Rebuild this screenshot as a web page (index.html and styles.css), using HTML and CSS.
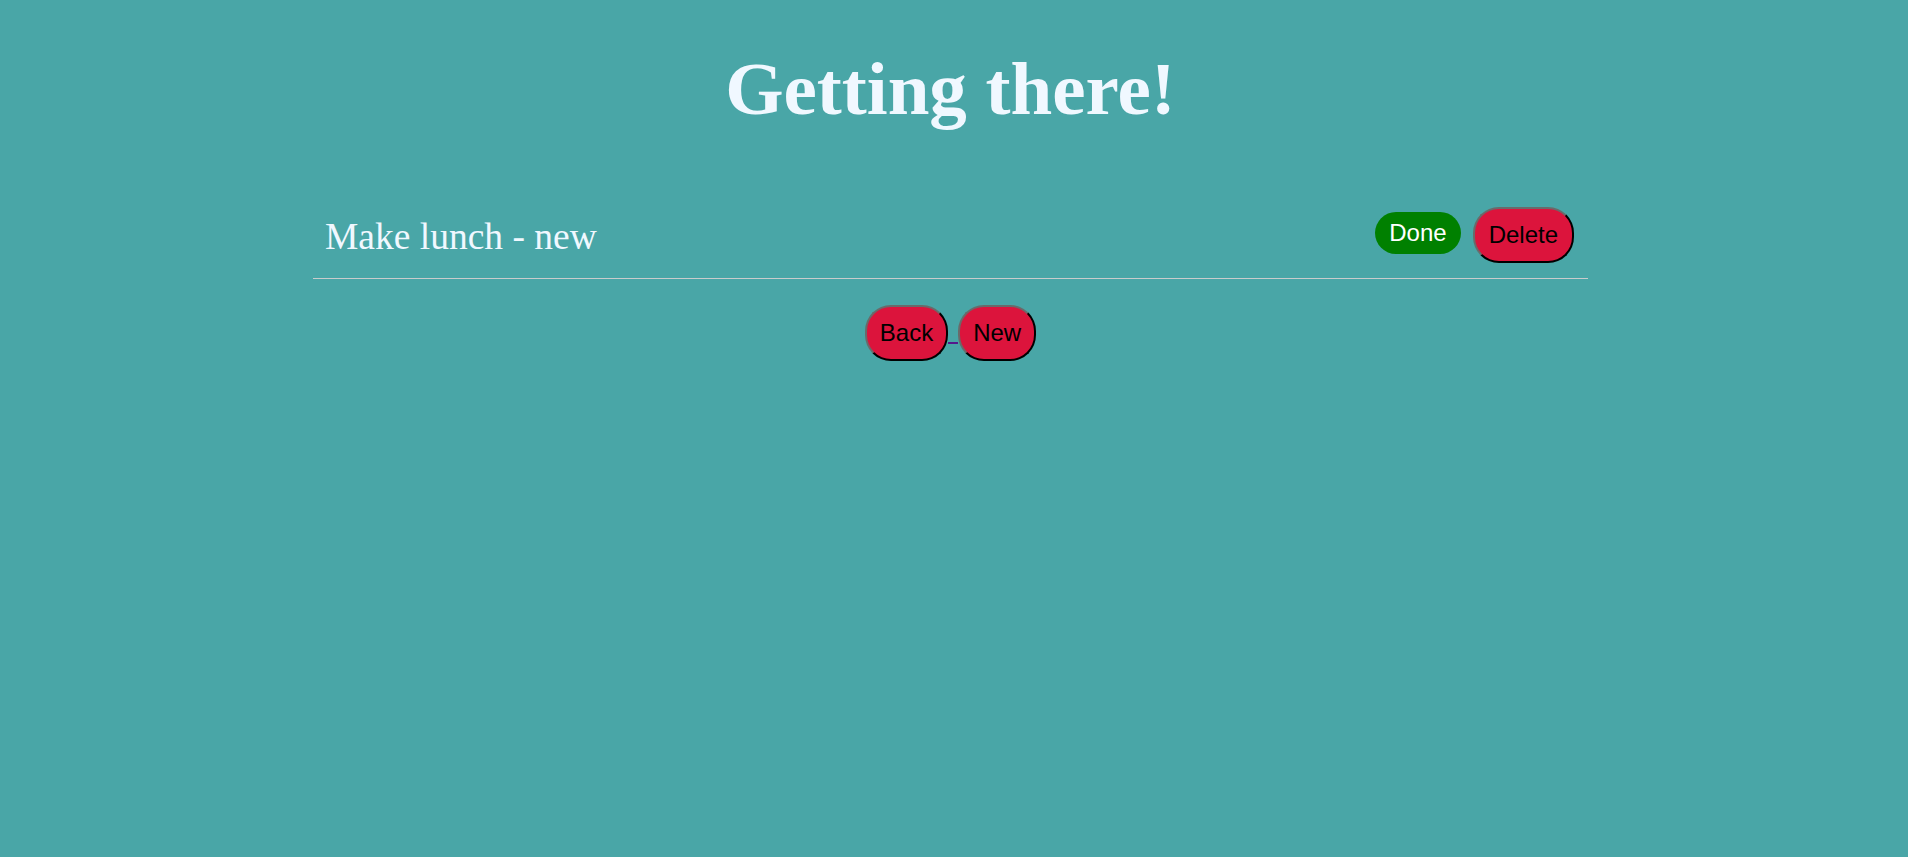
FILE: index.html
```html
<!DOCTYPE html>
<html lang="en">
<head>
<meta charset="utf-8">
<title>Getting there!</title>
<link rel="stylesheet" href="styles.css">
</head>
<body>
  <main class="page">
    <h1 class="title">Getting there!</h1>
    <ul class="todo-list">
      <li class="todo-item">
        <span class="todo-text">Make lunch - new</span>
        <div class="todo-actions">
          <button class="btn btn-done">Done</button>
          <button class="btn btn-red btn-wide">Delete</button>
        </div>
      </li>
    </ul>
    <nav class="nav">
      <a class="nav-link" href="#"><button class="btn btn-red">Back</button><span class="link-gap"></span></a>
      <a class="nav-link" href="#"><button class="btn btn-red">New</button></a>
    </nav>
  </main>
</body>
</html>
```

FILE: styles.css
```css
html, body {
  margin: 0;
  background: #49a6a7;
}

body {
  padding: 0 7px 0 0;
  min-height: 857px;
  box-sizing: border-box;
  font-family: "Liberation Serif", "Times New Roman", serif;
  color: #f0f8ff;
}

.page {
  width: 1275px;
  margin: 0 auto;
}

.title {
  margin: 47px 0 62px;
  font-size: 75px;
  line-height: 83px;
  font-weight: bold;
  text-align: center;
  color: #f0f8ff;
}

.todo-list {
  list-style: none;
  margin: 0;
  padding: 0;
}

.todo-item {
  display: flex;
  align-items: center;
  justify-content: space-between;
  padding: 15px 14px 15px 12px;
  border-bottom: 1px solid #c9cccc;
}

.todo-text {
  font-size: 37.5px;
  line-height: 42px;
  padding-top: 3px;
}

.todo-actions {
  display: flex;
  align-items: center;
  gap: 12px;
}

.btn {
  font-family: "Liberation Sans", Arial, sans-serif;
  font-size: 24px;
  line-height: 28px;
  margin: 0;
  cursor: pointer;
}

.btn-done {
  background: #008000;
  color: #ffffff;
  border: none;
  padding: 7px 14px;
  border-radius: 21px;
  margin-bottom: 4px;
}

.btn-red {
  background: #dc143c;
  color: #000000;
  border-width: 2px;
  border-style: solid;
  border-color: #6a6a6a #000000 #000000 #6a6a6a;
  padding: 12px 13px;
  border-radius: 26px;
}

.btn-wide {
  padding: 12px 14px;
}

.nav {
  display: flex;
  justify-content: center;
  margin-top: 26px;
}

.nav-link {
  display: flex;
  align-items: flex-end;
  text-decoration: none;
}

.link-gap {
  width: 10px;
  height: 2px;
  margin-bottom: 17px;
  background: #551a8b;
}
```
